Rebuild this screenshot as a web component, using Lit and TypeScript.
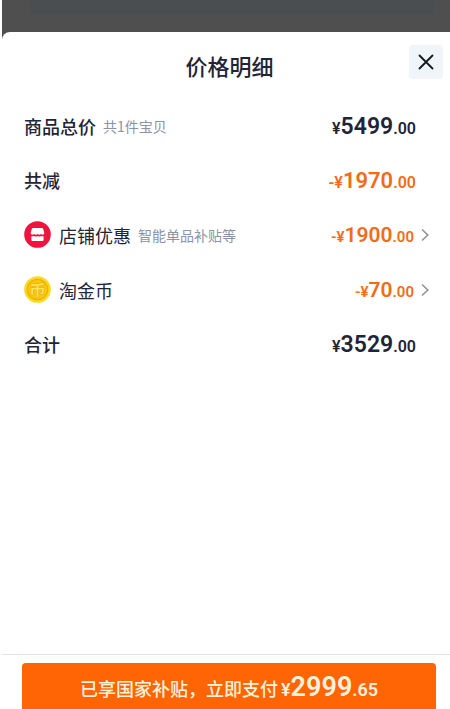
import { LitElement, html, css, svg, nothing } from "lit";
import { customElement, property } from "lit/decorators.js";

const storeIcon = html`<svg class="icon" viewBox="0 0 27 27" aria-hidden="true">
  <circle cx="13.5" cy="13.5" r="13.3" fill="#f0123f" />
  <path d="M7.8 8Q8 7 9.2 7H17.8Q19 7 19.2 8L20.2 11.4V12.8Q18.6 14.4 17 13.1Q15.2 14.4 13.5 13.1Q11.8 14.4 10 13.1Q8.4 14.4 6.8 12.8V11.4Z" fill="#fff" />
  <path d="M7.4 15.2Q9 15.6 10.1 14.9Q11.8 16 13.5 14.9Q15.2 16 16.9 14.9Q18 15.6 19.6 15.2V18.8Q19.6 20 18.4 20H8.6Q7.4 20 7.4 18.8Z" fill="#fff" />
</svg>`;

const coinIcon = html`<svg class="icon" viewBox="0 0 27 27" aria-hidden="true">
  <circle cx="13.5" cy="13.5" r="13.3" fill="#fbdb1e" />
  <circle cx="13.5" cy="13.5" r="10.2" fill="#f9c90f" stroke="#f0b10c" stroke-width="1.3" />
  <path d="M19 7.8Q14 9.2 8 9M8.2 18V12.6H18.8V16.4Q18.8 17.6 17 17.4M13.5 9V20.6" fill="none" stroke="#eaa90c" stroke-width="3" stroke-linecap="round" />
  <path d="M19 7.8Q14 9.2 8 9M8.2 18V12.6H18.8V16.4Q18.8 17.6 17 17.4M13.5 9V20.6" fill="none" stroke="#fde45a" stroke-width="1.8" stroke-linecap="round" />
</svg>`;

interface PriceRow {
  label: string;
  note?: string;
  icon?: unknown;
  sign?: string;
  whole: string;
  cents: string;
  link?: boolean;
}

const rows: PriceRow[] = [
  { label: "商品总价", note: "共1件宝贝", whole: "5499", cents: ".00" },
  { label: "共减", sign: "-", whole: "1970", cents: ".00" },
  { label: "店铺优惠", note: "智能单品补贴等", icon: storeIcon, sign: "-", whole: "1900", cents: ".00", link: true },
  { label: "淘金币", icon: coinIcon, sign: "-", whole: "70", cents: ".00", link: true },
  { label: "合计", whole: "3529", cents: ".00" },
];

@customElement("price-amount")
export class PriceAmount extends LitElement {
  @property() sign = "";
  @property() whole = "";
  @property() cents = "";

  static styles = css`
    :host {
      font-family: Roboto, "Noto Sans CJK SC", sans-serif;
      font-size: 16px;
      font-weight: 600;
      white-space: nowrap;
    }
    .whole {
      font-size: var(--whole-size, 23px);
    }
  `;

  render() {
    return html`${this.sign}¥<span class="whole">${this.whole}</span>${this.cents}`;
  }
}

@customElement("app-root")
export class AppRoot extends LitElement {
  static styles = css`
    :host {
      display: flex;
      flex-direction: column;
      min-height: 100vh;
      box-sizing: border-box;
      padding-left: 2px;
      background: #fff;
      color: #1f2536;
      font-family: "Noto Sans CJK SC", sans-serif;
    }
    .backdrop {
      height: 40px;
      padding: 0 16px 0 28px;
      background: #4f4f4f;
    }
    .behind {
      height: 14px;
      background: #4a4e51;
    }
    .sheet {
      flex: 1;
      display: flex;
      flex-direction: column;
      margin-top: -8px;
      border-radius: 8px 0 0 0;
      background: #fff;
    }
    .head {
      display: grid;
      grid-template-columns: 1fr auto 1fr;
      align-items: center;
      box-sizing: border-box;
      height: 67px;
      padding: 0 7px 2px 14px;
    }
    h1 {
      grid-column: 2;
      margin: 0;
      font-size: 22px;
      line-height: 32px;
      font-weight: 500;
    }
    .close {
      justify-self: end;
      display: grid;
      place-items: center;
      width: 34px;
      height: 34px;
      margin-bottom: 6px;
      padding: 0;
      border: 0;
      border-radius: 4px;
      background: #f0f5fa;
      color: #15181e;
    }
    .rows {
      flex: 1;
      margin: 0;
      padding: 0 34px 0 22px;
      list-style: none;
    }
    .row {
      display: flex;
      align-items: center;
      height: 54px;
    }
    .row.link {
      height: 55px;
      margin-right: -14px;
    }
    .icon {
      flex: none;
      width: 27px;
      height: 27px;
      margin-right: 8px;
    }
    .label {
      font-size: 18px;
      line-height: 26px;
      font-weight: 500;
    }
    .link .label {
      font-weight: 400;
    }
    .note {
      margin-left: 7px;
      color: #8b93a5;
      font-size: 14px;
      line-height: 26px;
    }
    price-amount {
      margin-left: auto;
    }
    .minus {
      --whole-size: 22px;
      color: #f26c18;
    }
    .link .minus {
      --whole-size: 21px;
      font-size: 15px;
    }
    .more {
      display: grid;
      place-items: center;
      width: 10px;
      height: 24px;
      margin-left: 6px;
      padding: 0;
      border: 0;
      background: none;
      color: #8f939b;
    }
    .foot {
      padding: 8px 14px 0 20px;
      border-top: 1px solid #e4e4e6;
    }
    .pay {
      display: flex;
      justify-content: center;
      align-items: baseline;
      gap: 3px;
      width: 100%;
      height: 46px;
      padding: 6px 0 0;
      border: 0;
      border-radius: 4px 4px 0 0;
      background: #ff6505;
      color: #fff1dc;
      font-family: inherit;
      font-size: 18px;
      line-height: 36px;
      font-weight: 500;
    }
    .pay price-amount {
      --whole-size: 27px;
      margin: 0;
      font-size: 18px;
    }
  `;

  private renderRow(row: PriceRow) {
    return html`<li class="row ${row.link ? "link" : ""}">
      ${row.icon ?? nothing}
      <span class="label">${row.label}</span>
      ${row.note ? html`<span class="note">${row.note}</span>` : nothing}
      <price-amount
        class=${row.sign ? "minus" : ""}
        .sign=${row.sign ?? ""}
        .whole=${row.whole}
        .cents=${row.cents}
      ></price-amount>
      ${row.link
        ? html`<button class="more" aria-label=${row.label}>
            <svg width="8" height="14" viewBox="0 0 8 14" fill="none" stroke="currentColor" stroke-width="1.6">
              ${svg`<path d="M1 1.5L6.8 7L1 12.5" />`}
            </svg>
          </button>`
        : nothing}
    </li>`;
  }

  render() {
    return html`
      <div class="backdrop"><div class="behind"></div></div>
      <main class="sheet">
        <header class="head">
          <h1>价格明细</h1>
          <button class="close" aria-label="关闭">
            <svg width="16" height="16" viewBox="0 0 16 16" fill="none" stroke="currentColor" stroke-width="1.8" stroke-linecap="round">
              <path d="M1.5 1.5L14.5 14.5M14.5 1.5L1.5 14.5" />
            </svg>
          </button>
        </header>
        <ul class="rows">
          ${rows.map((row) => this.renderRow(row))}
        </ul>
        <footer class="foot">
          <button class="pay">
            <span>已享国家补贴，立即支付</span>
            <price-amount whole="2999" cents=".65"></price-amount>
          </button>
        </footer>
      </main>
    `;
  }
}
